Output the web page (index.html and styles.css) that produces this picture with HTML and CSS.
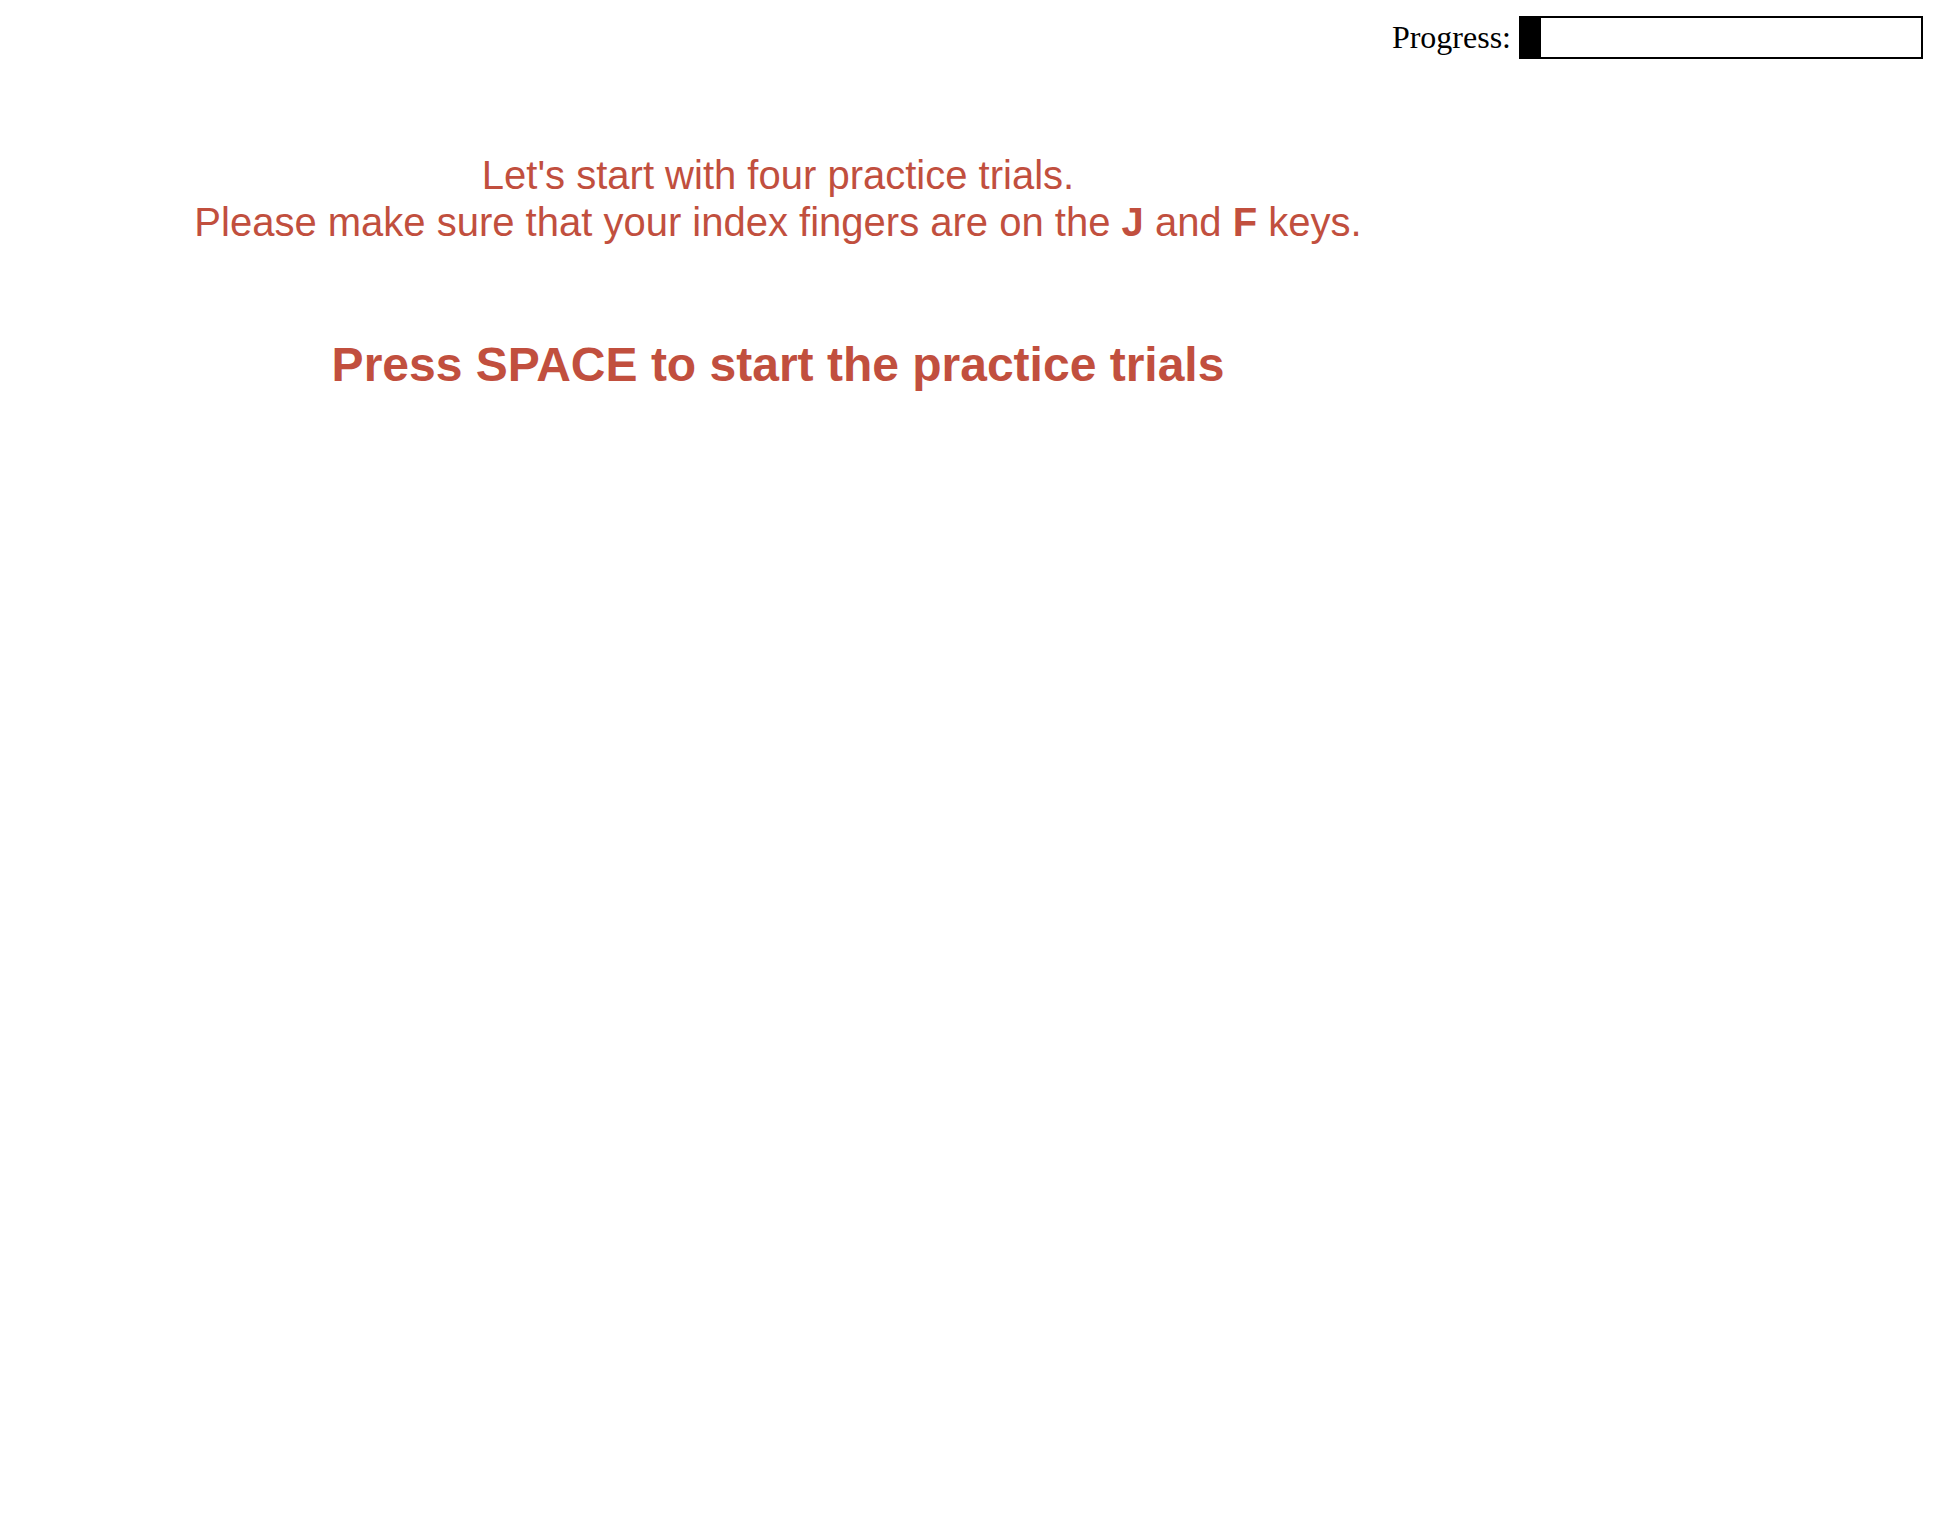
FILE: index.html
```html
<!DOCTYPE html>
<html lang="en">
<head>
<meta charset="utf-8">
<title>Practice</title>
<link rel="stylesheet" href="styles.css">
</head>
<body>
<div class="progress-row">
  <span class="progress-label">Progress:</span>
  <div class="progress-box"><div class="progress-fill"></div></div>
</div>
<main class="content">
  <p class="intro">Let's start with four practice trials.<br>Please make sure that your index fingers are on the <b>J</b> and <b>F</b> keys.</p>
  <p class="prompt">Press SPACE to start the practice trials</p>
</main>
</body>
</html>
```

FILE: styles.css
```css
html, body {
  margin: 0;
  padding: 0;
  background: #ffffff;
}

.progress-row {
  display: flex;
  justify-content: flex-end;
  align-items: center;
  padding: 16px 17px 0 0;
  gap: 8px;
}

.progress-label {
  font-family: "Liberation Serif", "Times New Roman", serif;
  font-size: 32px;
  color: #000;
}

.progress-box {
  width: 400px;
  height: 39px;
  border: 2px solid #000;
  display: flex;
}

.progress-fill {
  width: 20px;
  background: #000;
}

.content {
  width: 1540px;
  margin-left: 8px;
  text-align: center;
  font-family: "Liberation Sans", Arial, sans-serif;
  color: #c14f3e;
}

.intro {
  margin: 93px 0 0 0;
  font-size: 40px;
  line-height: 47px;
}

.prompt {
  margin: 91px 0 0 0;
  font-size: 48px;
  font-weight: bold;
}
```
